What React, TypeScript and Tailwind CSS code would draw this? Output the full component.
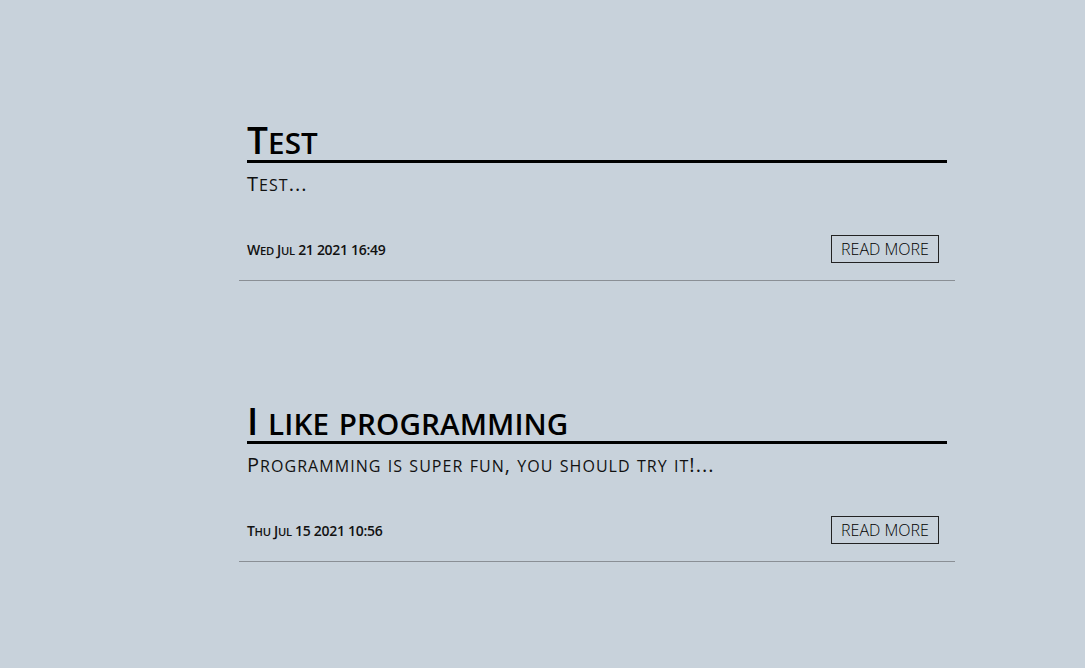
import React from 'react';

type Post = {
  title: string;
  excerpt: string;
  date: string;
};

const posts: Post[] = [
  { title: 'Test', excerpt: 'Test...', date: 'Wed Jul 21 2021 16:49' },
  {
    title: 'I like programming',
    excerpt: 'Programming is super fun, you should try it!...',
    date: 'Thu Jul 15 2021 10:56',
  },
];

// small caps with larger lowercase glyphs than the browser's synthetic ones
const SmallCaps: React.FC<{ text: string }> = ({ text }) => {
  const runs = text.match(/[a-z]+|[^a-z]+/g) ?? [];
  return (
    <>
      {runs.map((run, i) =>
        /[a-z]/.test(run) ? (
          <span key={i} className="text-[0.8em] leading-none">
            {run.toUpperCase()}
          </span>
        ) : (
          <span key={i}>{run}</span>
        )
      )}
    </>
  );
};

const PostCard: React.FC<{ post: Post }> = ({ post }) => (
  <article className="border-b border-[#8a8f95] px-2 pt-[119px] pb-[17px]">
    <h2 className="text-[37px] leading-[41px] font-semibold tracking-[0.1px] text-black border-b-[3px] border-black">
      <SmallCaps text={post.title} />
    </h2>
    <p className="mt-[7px] text-[20px] leading-[28px] tracking-[1.05px] text-[#111]">
      <SmallCaps text={post.excerpt} />
    </p>
    <div className="mt-[37px] flex items-center justify-between pr-2">
      <span className="text-[14px] font-semibold tracking-[-0.3px] text-[#111]">
        <SmallCaps text={post.date} />
      </span>
      <button className="h-[28px] w-[108px] border border-[#222] text-[16px] font-light text-black">
        READ MORE
      </button>
    </div>
  </article>
);

export default function App() {
  return (
    <div className="min-h-screen bg-[#c8d2db] font-['Open_Sans',sans-serif]">
      <main className="ml-[239px] w-[716px]">
        {posts.map((post) => (
          <PostCard key={post.title} post={post} />
        ))}
      </main>
    </div>
  );
}
